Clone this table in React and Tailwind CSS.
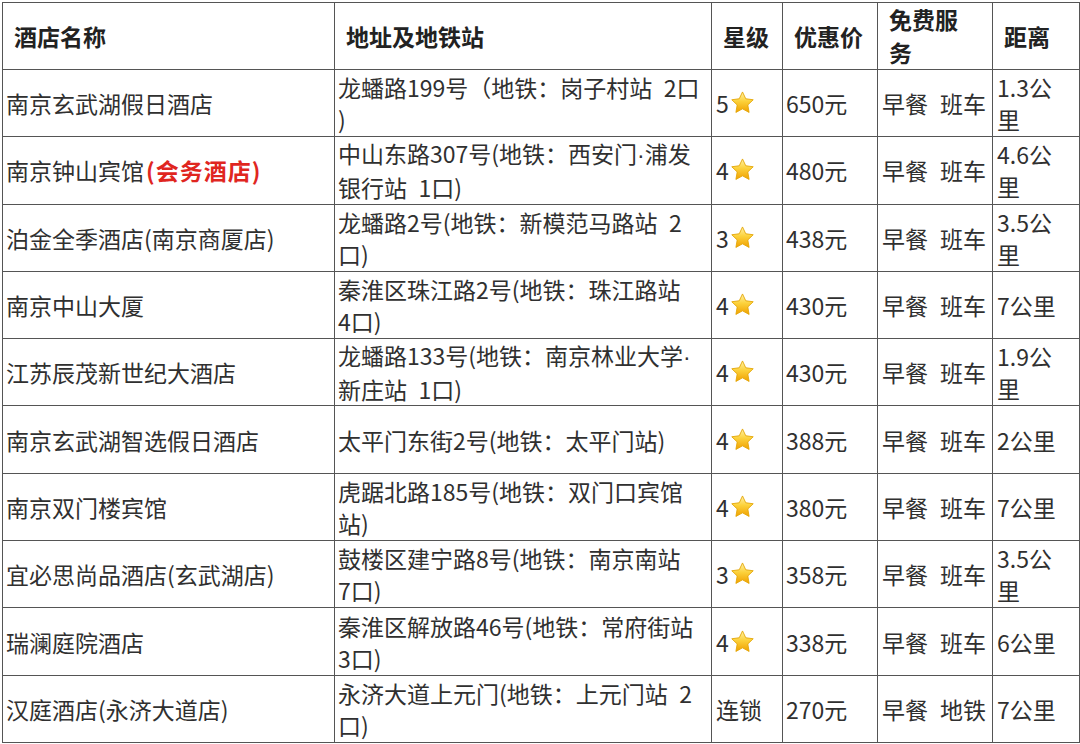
import React from "react";

// Hotel list table: name, address + metro, stars, price, free services, distance
const rows = [
  { name: ["南京玄武湖假日酒店"], addr: ["龙蟠路199号（地铁：岗子村站\u20022口", ")"], star: "5", price: "650元", svc: ["早餐", "班车"], dist: ["1.3公", "里"] },
  { name: ["南京钟山宾馆"], tag: "(会务酒店)", addr: ["中山东路307号(地铁：西安门*浦发", "银行站\u20021口)"], star: "4", price: "480元", svc: ["早餐", "班车"], dist: ["4.6公", "里"] },
  { name: ["泊金全季酒店(南京商厦店)"], addr: ["龙蟠路2号(地铁：新模范马路站\u20022", "口)"], star: "3", price: "438元", svc: ["早餐", "班车"], dist: ["3.5公", "里"] },
  { name: ["南京中山大厦"], addr: ["秦淮区珠江路2号(地铁：珠江路站", "4口)"], star: "4", price: "430元", svc: ["早餐", "班车"], dist: ["7公里"] },
  { name: ["江苏辰茂新世纪大酒店"], addr: ["龙蟠路133号(地铁：南京林业大学*", "新庄站\u20021口)"], star: "4", price: "430元", svc: ["早餐", "班车"], dist: ["1.9公", "里"] },
  { name: ["南京玄武湖智选假日酒店"], addr: ["太平门东街2号(地铁：太平门站)"], star: "4", price: "388元", svc: ["早餐", "班车"], dist: ["2公里"] },
  { name: ["南京双门楼宾馆"], addr: ["虎踞北路185号(地铁：双门口宾馆", "站)"], star: "4", price: "380元", svc: ["早餐", "班车"], dist: ["7公里"] },
  { name: ["宜必思尚品酒店(玄武湖店)"], addr: ["鼓楼区建宁路8号(地铁：南京南站", "7口)"], star: "3", price: "358元", svc: ["早餐", "班车"], dist: ["3.5公", "里"] },
  { name: ["瑞澜庭院酒店"], addr: ["秦淮区解放路46号(地铁：常府街站", "3口)"], star: "4", price: "338元", svc: ["早餐", "班车"], dist: ["6公里"] },
  { name: ["汉庭酒店(永济大道店)"], addr: ["永济大道上元门(地铁：上元门站\u20022", "口)"], star: null, chain: "连锁", price: "270元", svc: ["早餐", "地铁"], dist: ["7公里"] },
];

function Star() {
  return (
    <svg viewBox="0 0 24 24" className="h-[26px] w-[27px]">
      <defs>
        <linearGradient id="sg" x1="0" y1="0" x2="0" y2="1">
          <stop offset="0" stopColor="#fff1a8" />
          <stop offset="0.45" stopColor="#fcd23c" />
          <stop offset="1" stopColor="#f0a000" />
        </linearGradient>
      </defs>
      <path
        d="M12 1.8l3 6.3 6.9.9-5 4.8 1.2 6.9L12 17.4l-6.1 3.3 1.2-6.9-5-4.8 6.9-.9z"
        fill="url(#sg)"
        stroke="#e3a400"
        strokeWidth="0.8"
        strokeLinejoin="round"
      />
    </svg>
  );
}

// "*" marks a narrow middle dot, drawn in a Latin font
function Line({ text }) {
  const parts = text.split("*");
  return (
    <div className="whitespace-pre">
      {parts.map((p, i) => (
        <React.Fragment key={i}>
          {i > 0 && <span style={{ fontFamily: '"Liberation Sans", sans-serif' }}>·</span>}
          {p}
        </React.Fragment>
      ))}
    </div>
  );
}

const th = "border-[1.5px] border-[#555] pl-[11px] text-left align-middle font-bold leading-[33px] text-[#222]";
const td = "border-[1.5px] border-[#555] pl-[3px] align-middle leading-[32px] text-[#303030] whitespace-nowrap overflow-hidden";

export default function App() {
  return (
    <div
      className="h-[744px] w-[1080px] overflow-hidden bg-white pl-[2px] pt-[2px]"
      style={{ fontFamily: '"Noto Sans CJK SC", "Noto Sans", sans-serif' }}
    >
      <table className="w-[1077px] table-fixed border-collapse text-[23px]">
        <colgroup>
          <col className="w-[332px]" />
          <col className="w-[377px]" />
          <col className="w-[71px]" />
          <col className="w-[95px]" />
          <col className="w-[115px]" />
          <col className="w-[87px]" />
        </colgroup>
        <thead>
          <tr className="h-[66px]">
            <th className={th}>酒店名称</th>
            <th className={th}>地址及地铁站</th>
            <th className={th}>星级</th>
            <th className={th}>优惠价</th>
            <th className={th}>
              <div>免费服</div>
              <div>务</div>
            </th>
            <th className={th}>距离</th>
          </tr>
        </thead>
        <tbody>
          {rows.map((r, i) => (
            <tr key={i} className="h-[67.3px]">
              <td className={td}>
                {r.name[0]}
                {r.tag && <span className="ml-[2px] font-bold tracking-[1px] text-[#e0261f]">{r.tag}</span>}
              </td>
              <td className={td}>
                {r.addr.map((l, j) => (
                  <Line key={j} text={l} />
                ))}
              </td>
              <td className={td + " pl-[4px]"}>
                {r.star ? (
                  <div className="flex items-center">
                    <span>{r.star}</span>
                    <Star />
                  </div>
                ) : (
                  r.chain
                )}
              </td>
              <td className={td}>{r.price}</td>
              <td className={td + " pl-[4px]"}>
                <span>{r.svc[0]}</span>
                <span className="ml-[12px]">{r.svc[1]}</span>
              </td>
              <td className={td + " pl-[4px]"}>
                {r.dist.map((l, j) => (
                  <Line key={j} text={l} />
                ))}
              </td>
            </tr>
          ))}
        </tbody>
      </table>
    </div>
  );
}
